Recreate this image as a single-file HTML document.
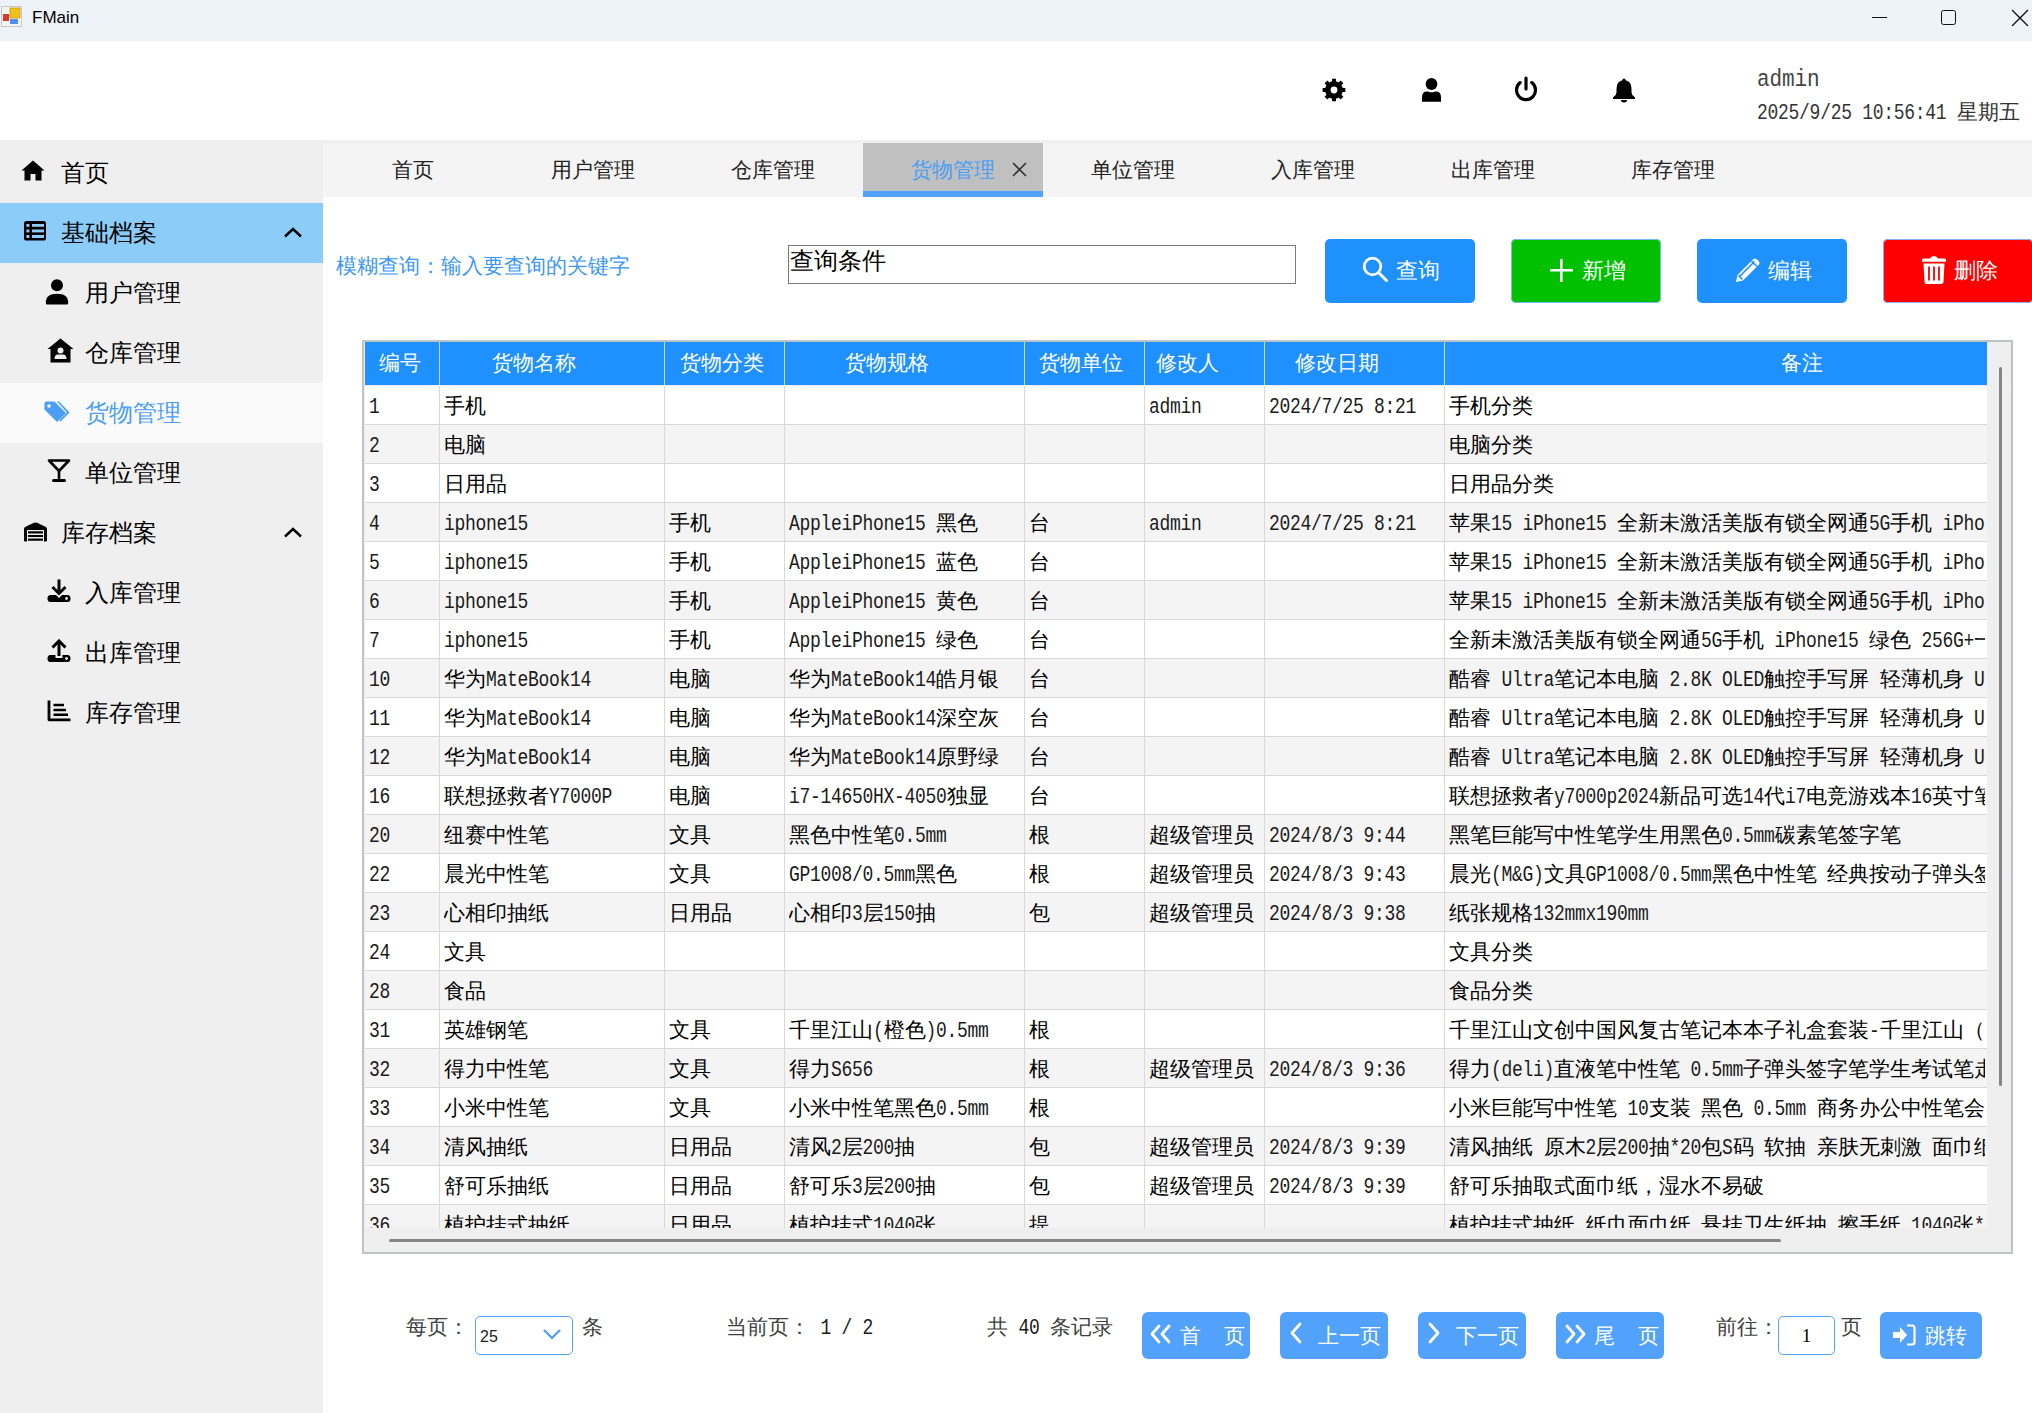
<!DOCTYPE html><html><head><meta charset="utf-8"><style>
html,body{margin:0;padding:0;}
body{width:2032px;height:1413px;overflow:hidden;position:relative;background:#fff;font-weight:300;font-family:'Liberation Sans',sans-serif;}
.t{position:absolute;white-space:nowrap;}
.m{font-family:'Liberation Mono',monospace;}
b.a{font-weight:normal;color:#1a1a1a;font-family:'Liberation Mono',monospace;font-size:18px;letter-spacing:-0.3px;display:inline-block;transform:scaleY(1.18);transform-origin:50% 62%;}
svg{display:block}
</style></head><body>
<div style="position:absolute;left:0px;top:0px;width:2032px;height:41px;background:#eef2f9"></div>
<svg style="position:absolute;left:1px;top:6px" width="21" height="21" viewBox="0 0 21 21"><rect x="0.5" y="0.5" width="20" height="20" fill="#f4f4f4" stroke="#c8c8c8"/>
<rect x="9" y="2" width="10" height="10" fill="#f2c21a" stroke="#c99a10" stroke-width="0.8"/>
<rect x="2" y="8" width="6" height="7" fill="#d83a2a"/>
<rect x="9" y="13" width="8" height="5" fill="#4d8ef0"/></svg>
<div class="t " style="left:32px;top:5px;font-size:17px;line-height:26px;height:26px;color:#000;">FMain</div>
<div style="position:absolute;left:1872px;top:17px;width:15px;height:1.2px;background:#111"></div>
<div style="position:absolute;left:1941px;top:10px;width:15px;height:15px;border:1.6px solid #111;border-radius:2.5px;box-sizing:border-box"></div>
<svg style="position:absolute;left:2011px;top:9px" width="18" height="18" viewBox="0 0 18 18"><path d="M1.5,1.5 L16.5,16.5 M16.5,1.5 L1.5,16.5" stroke="#111" stroke-width="1.4" stroke-linecap="round"/></svg>
<svg style="position:absolute;left:1322px;top:78px" width="24" height="24" viewBox="0 0 24 24"><path fill="#000" fill-rule="evenodd" d="M20.58,10.04 L23.34,10.07 L23.34,13.93 L20.58,13.96 L20.13,15.37 L19.45,16.68 L21.38,18.65 L18.65,21.38 L16.68,19.45 L15.37,20.13 L13.96,20.58 L13.93,23.34 L10.07,23.34 L10.04,20.58 L8.63,20.13 L7.32,19.45 L5.35,21.38 L2.62,18.65 L4.55,16.68 L3.87,15.37 L3.42,13.96 L0.66,13.93 L0.66,10.07 L3.42,10.04 L3.87,8.63 L4.55,7.32 L2.62,5.35 L5.35,2.62 L7.32,4.55 L8.63,3.87 L10.04,3.42 L10.07,0.66 L13.93,0.66 L13.96,3.42 L15.37,3.87 L16.68,4.55 L18.65,2.62 L21.38,5.35 L19.45,7.32 L20.13,8.63Z M15.4,12 A3.4,3.4 0 1,0 8.6,12 A3.4,3.4 0 1,0 15.4,12Z"/><circle cx="12" cy="12" r="8.6" fill="#000"/><circle cx="12" cy="12" r="3.4" fill="#fff"/></svg>
<svg style="position:absolute;left:1421px;top:78px" width="21" height="24" viewBox="0 0 21 24"><circle cx="10.5" cy="6" r="5.9" fill="#000"/><path d="M1,23.8 L1,19 Q1,13.4 6,13.4 L7.2,13.4 Q10.5,15.2 13.8,13.4 L15,13.4 Q20,13.4 20,19 L20,23.8 Z" fill="#000"/></svg>
<svg style="position:absolute;left:1513px;top:76px" width="26" height="26" viewBox="0 0 26 26"><path d="M7.2,6.6 A9.5,9.5 0 1,0 18.8,6.6" fill="none" stroke="#000" stroke-width="3.2" stroke-linecap="round"/><path d="M13,2 L13,13" stroke="#000" stroke-width="3.2" stroke-linecap="round"/></svg>
<svg style="position:absolute;left:1612px;top:78px" width="24" height="25" viewBox="0 0 24 25"><path d="M12,0.5 Q13.6,0.5 13.6,2.2 Q19.5,3.5 19.5,10.5 L19.5,14.5 Q19.5,17 23,19.5 L23,21 L1,21 L1,19.5 Q4.5,17 4.5,14.5 L4.5,10.5 Q4.5,3.5 10.4,2.2 Q10.4,0.5 12,0.5 Z M9,22 L15,22 Q15,24.5 12,24.5 Q9,24.5 9,22 Z" fill="#000"/></svg>
<div class="t m" style="left:1757px;top:66px;font-size:21px;line-height:30px;height:30px;color:#444;letter-spacing:-0.1px"><span style="display:inline-block;transform:scaleY(1.12);transform-origin:50% 70%">admin</span></div>
<div class="t m" style="left:1757px;top:97px;font-size:18px;line-height:30px;height:30px;color:#333;letter-spacing:-0.28px"><span style="display:inline-block;transform:scaleY(1.18);transform-origin:50% 65%">2025/9/25&nbsp;10:56:41&nbsp;</span><span style="font-family:'Liberation Sans',sans-serif;font-size:21px;letter-spacing:0">星期五</span></div>
<div style="position:absolute;left:0px;top:140px;width:2032px;height:3px;background:#efefef"></div>
<div style="position:absolute;left:0px;top:140px;width:323px;height:1273px;background:#efefef"></div>
<div style="position:absolute;left:0px;top:203px;width:323px;height:60px;background:#8bcdf8"></div>
<div style="position:absolute;left:0px;top:383px;width:323px;height:60px;background:#fafafa"></div>
<div class="t " style="left:61px;top:153px;font-size:24px;line-height:40px;height:40px;color:#000;">首页</div>
<div class="t " style="left:61px;top:213px;font-size:24px;line-height:40px;height:40px;color:#000;">基础档案</div>
<div class="t " style="left:85px;top:273px;font-size:24px;line-height:40px;height:40px;color:#000;">用户管理</div>
<div class="t " style="left:85px;top:333px;font-size:24px;line-height:40px;height:40px;color:#000;">仓库管理</div>
<div class="t " style="left:85px;top:393px;font-size:24px;line-height:40px;height:40px;color:#4a9ff5;">货物管理</div>
<div class="t " style="left:85px;top:453px;font-size:24px;line-height:40px;height:40px;color:#000;">单位管理</div>
<div class="t " style="left:61px;top:513px;font-size:24px;line-height:40px;height:40px;color:#000;">库存档案</div>
<div class="t " style="left:85px;top:573px;font-size:24px;line-height:40px;height:40px;color:#000;">入库管理</div>
<div class="t " style="left:85px;top:633px;font-size:24px;line-height:40px;height:40px;color:#000;">出库管理</div>
<div class="t " style="left:85px;top:693px;font-size:24px;line-height:40px;height:40px;color:#000;">库存管理</div>
<svg style="position:absolute;left:21px;top:160px" width="24" height="21" viewBox="0 0 24 21"><path d="M12,0.5 L23.5,10.5 L20.5,10.5 L20.5,20.5 L14.5,20.5 L14.5,14 L9.5,14 L9.5,20.5 L3.5,20.5 L3.5,10.5 L0.5,10.5 Z" fill="#000"/></svg>
<svg style="position:absolute;left:23px;top:220px" width="24" height="22" viewBox="0 0 24 22"><rect x="1" y="1" width="22" height="19.6" rx="2.6" fill="#000"/><g fill="#8bcdf8"><rect x="3.4" y="4" width="3" height="2.8"/><rect x="9" y="4" width="12" height="2.8"/><rect x="3.4" y="9.5" width="3" height="2.9"/><rect x="9" y="9.5" width="12" height="2.9"/><rect x="3.4" y="15" width="3" height="3"/><rect x="9" y="15" width="12" height="3"/></g></svg>
<svg style="position:absolute;left:45px;top:279px" width="24" height="26" viewBox="0 0 24 26"><circle cx="12" cy="6.3" r="6" fill="#000"/><path d="M0.8,24 Q0.8,14.8 12,14.8 Q23.2,14.8 23.2,24 Q23.2,25.5 21.7,25.5 L2.3,25.5 Q0.8,25.5 0.8,24 Z" fill="#000"/></svg>
<svg style="position:absolute;left:47px;top:338px" width="27" height="25" viewBox="0 0 27 25"><path d="M13.5,0.5 L26.5,11 L23.5,11 L23.5,24.5 L3.5,24.5 L3.5,11 L0.5,11 Z" fill="#000"/><circle cx="13.5" cy="12.5" r="3" fill="#efefef"/><path d="M7.5,21 Q7.5,16.5 11,16.5 L16,16.5 Q19.5,16.5 19.5,21 Z" fill="#efefef"/></svg>
<svg style="position:absolute;left:44px;top:401px" width="26" height="21" viewBox="0 0 26 21"><path d="M0.5,2.5 Q0.5,0.5 2.5,0.5 L10.5,0.5 L22,12 L13,21 L0.5,8.5 Z" fill="#4a9ff5"/><circle cx="5" cy="5" r="1.8" fill="#fafafa"/><path d="M13,0.5 L15,0.5 L25.5,11.5 L16.5,20.5 L15.2,19.2 L23,11.5 Z" fill="#4a9ff5"/></svg>
<svg style="position:absolute;left:47px;top:458px" width="24" height="25" viewBox="0 0 24 25"><path d="M2,2.5 L22,2.5 L12,13 Z" fill="none" stroke="#000" stroke-width="2.6" stroke-linejoin="round"/><path d="M12,12 L12,22" stroke="#000" stroke-width="2.6"/><path d="M6.5,22.5 L17.5,22.5" stroke="#000" stroke-width="3" stroke-linecap="round"/></svg>
<svg style="position:absolute;left:23px;top:522px" width="25" height="20" viewBox="0 0 25 20"><path d="M1,18.5 L1,7 Q1,5.5 2.5,4.8 L11,0.8 Q12.5,0.2 14,0.8 L22.5,4.8 Q24,5.5 24,7 L24,18.5 Q24,19.5 23,19.5 L21,19.5 L21,8 L4,8 L4,19.5 L2,19.5 Q1,19.5 1,18.5 Z" fill="#000"/><path d="M5,10.3 H20 M5,14 H20 M5,17.7 H20" stroke="#000" stroke-width="2.2"/></svg>
<svg style="position:absolute;left:47px;top:579px" width="24" height="24" viewBox="0 0 24 24"><path d="M12,0.5 L12,13" stroke="#000" stroke-width="3"/><path d="M5.5,8 L12,14.5 L18.5,8" fill="none" stroke="#000" stroke-width="3"/><path d="M3.5,16 L9,16 L12,19 L15,16 L20.5,16 Q23.5,16 23.5,19.5 Q23.5,23 20.5,23 L3.5,23 Q0.5,23 0.5,19.5 Q0.5,16 3.5,16 Z" fill="#000"/><circle cx="19.5" cy="19.5" r="1.4" fill="#efefef"/></svg>
<svg style="position:absolute;left:47px;top:639px" width="24" height="24" viewBox="0 0 24 24"><path d="M12,17 L12,3" stroke="#000" stroke-width="3"/><path d="M5.5,8.5 L12,2 L18.5,8.5" fill="none" stroke="#000" stroke-width="3"/><path d="M3.5,16 L8.5,16 L8.5,19 L15.5,19 L15.5,16 L20.5,16 Q23.5,16 23.5,19.5 Q23.5,23 20.5,23 L3.5,23 Q0.5,23 0.5,19.5 Q0.5,16 3.5,16 Z" fill="#000"/><circle cx="19.5" cy="19.5" r="1.4" fill="#efefef"/></svg>
<svg style="position:absolute;left:47px;top:700px" width="24" height="22" viewBox="0 0 24 22"><path d="M2,0.5 L2,19.8 L23.5,19.8" fill="none" stroke="#000" stroke-width="2.8" stroke-linejoin="round"/><path d="M6.5,5 H17 M6.5,10 H19 M6.5,14.8 H21" stroke="#000" stroke-width="2.4"/></svg>
<svg style="position:absolute;left:283px;top:227px" width="20" height="11" viewBox="0 0 20 11"><path d="M2,9.5 L10,2 L18,9.5" fill="none" stroke="#000" stroke-width="2.4"/></svg>
<svg style="position:absolute;left:283px;top:527px" width="20" height="11" viewBox="0 0 20 11"><path d="M2,9.5 L10,2 L18,9.5" fill="none" stroke="#000" stroke-width="2.4"/></svg>
<div style="position:absolute;left:323px;top:143px;width:1709px;height:54px;background:#f4f4f4"></div>
<div style="position:absolute;left:863px;top:143px;width:180px;height:48px;background:#c0c0c0"></div>
<div style="position:absolute;left:863px;top:191px;width:180px;height:6px;background:#50a2fa"></div>
<div class="t" style="left:323px;top:150px;width:180px;text-align:center;font-size:21px;line-height:40px;height:40px;color:#222">首页</div>
<div class="t" style="left:503px;top:150px;width:180px;text-align:center;font-size:21px;line-height:40px;height:40px;color:#222">用户管理</div>
<div class="t" style="left:683px;top:150px;width:180px;text-align:center;font-size:21px;line-height:40px;height:40px;color:#222">仓库管理</div>
<div class="t" style="left:863px;top:150px;width:180px;text-align:center;font-size:21px;line-height:40px;height:40px;color:#4a9ff5">货物管理</div>
<div class="t" style="left:1043px;top:150px;width:180px;text-align:center;font-size:21px;line-height:40px;height:40px;color:#222">单位管理</div>
<div class="t" style="left:1223px;top:150px;width:180px;text-align:center;font-size:21px;line-height:40px;height:40px;color:#222">入库管理</div>
<div class="t" style="left:1403px;top:150px;width:180px;text-align:center;font-size:21px;line-height:40px;height:40px;color:#222">出库管理</div>
<div class="t" style="left:1583px;top:150px;width:180px;text-align:center;font-size:21px;line-height:40px;height:40px;color:#222">库存管理</div>
<svg style="position:absolute;left:1012px;top:162px" width="15" height="15" viewBox="0 0 15 15"><path d="M1,1 L14,14 M14,1 L1,14" stroke="#333" stroke-width="1.6"/></svg>
<div class="t " style="left:336px;top:246px;font-size:21px;line-height:40px;height:40px;color:#3a97f5;">模糊查询：输入要查询的关键字</div>
<div style="position:absolute;left:788px;top:245px;width:508px;height:39px;border:1px solid #7a7a7a;box-sizing:border-box;background:#fff"></div>
<div class="t " style="left:790px;top:241px;font-size:24px;line-height:40px;height:40px;color:#000;">查询条件</div>
<div style="position:absolute;left:1325px;top:239px;width:150px;height:64px;background:#1f91fd;border-radius:5px;"></div>
<svg style="position:absolute;left:1362px;top:256px" width="28" height="28" viewBox="0 0 28 28"><circle cx="10.5" cy="10.5" r="8.3" fill="none" stroke="#fff" stroke-width="2.8"/><path d="M16.5,16.5 L24.5,24.5" stroke="#fff" stroke-width="3" stroke-linecap="round"/></svg>
<div class="t " style="left:1396px;top:251px;font-size:22px;line-height:40px;height:40px;color:#fff;">查询</div>
<div style="position:absolute;left:1511px;top:239px;width:150px;height:64px;background:#00c000;border-radius:5px;box-shadow:0 0 0 1px #7ab8f5 inset"></div>
<svg style="position:absolute;left:1549px;top:258px" width="25" height="25" viewBox="0 0 25 25"><path d="M12.3,1 V24 M1,12.3 H24" stroke="#fff" stroke-width="2.6"/></svg>
<div class="t " style="left:1582px;top:251px;font-size:22px;line-height:40px;height:40px;color:#fff;">新增</div>
<div style="position:absolute;left:1697px;top:239px;width:150px;height:64px;background:#1f91fd;border-radius:5px;"></div>
<svg style="position:absolute;left:1734px;top:256px" width="28" height="28" viewBox="0 0 28 28"><path d="M2,26 L3.5,19 L19,3.5 Q21,1.5 23,3.5 L24.5,5 Q26.5,7 24.5,9 L9,24.5 Z" fill="#fff"/><path d="M6,20 L20.5,5.5 M4.5,19.5 L8.5,23.5 M17.5,5 L23,10.5" stroke="#1f91fd" stroke-width="1.6" fill="none"/></svg>
<div class="t " style="left:1768px;top:251px;font-size:22px;line-height:40px;height:40px;color:#fff;">编辑</div>
<div style="position:absolute;left:1883px;top:239px;width:150px;height:64px;background:#ff0000;border-radius:5px;box-shadow:0 0 0 1px #8ab0f0 inset"></div>
<svg style="position:absolute;left:1921px;top:255px" width="26" height="30" viewBox="0 0 26 30"><path d="M1,5 Q1,3.5 2.5,3.5 L9,3.5 Q10,1 13,1 Q16,1 17,3.5 L23.5,3.5 Q25,3.5 25,5 L25,6.8 L1,6.8 Z" fill="#fff"/><path d="M2.5,8.5 L23.5,8.5 L22.5,26.5 Q22.5,29 20,29 L6,29 Q3.5,29 3.5,26.5 Z" fill="#fff"/><path d="M8,11.5 V25.5 M13,11.5 V25.5 M18,11.5 V25.5" stroke="#ff0000" stroke-width="1.8"/></svg>
<div class="t " style="left:1954px;top:251px;font-size:22px;line-height:40px;height:40px;color:#fff;">删除</div>
<div style="position:absolute;left:362px;top:340px;width:1651px;height:914px;border:2px solid #bfc2c8;box-sizing:border-box;background:#efefef"></div>
<div style="position:absolute;left:365px;top:342px;width:1622px;height:43px;background:#1e90ff"></div>
<div style="position:absolute;left:439px;top:342px;width:1px;height:43px;background:#c6daf0"></div>
<div style="position:absolute;left:664px;top:342px;width:1px;height:43px;background:#c6daf0"></div>
<div style="position:absolute;left:784px;top:342px;width:1px;height:43px;background:#c6daf0"></div>
<div style="position:absolute;left:1024px;top:342px;width:1px;height:43px;background:#c6daf0"></div>
<div style="position:absolute;left:1144px;top:342px;width:1px;height:43px;background:#c6daf0"></div>
<div style="position:absolute;left:1264px;top:342px;width:1px;height:43px;background:#c6daf0"></div>
<div style="position:absolute;left:1444px;top:342px;width:1px;height:43px;background:#c6daf0"></div>
<div class="t " style="left:379px;top:343px;font-size:21px;line-height:40px;height:40px;color:#fff;">编号</div>
<div class="t " style="left:492px;top:343px;font-size:21px;line-height:40px;height:40px;color:#fff;">货物名称</div>
<div class="t " style="left:680px;top:343px;font-size:21px;line-height:40px;height:40px;color:#fff;">货物分类</div>
<div class="t " style="left:845px;top:343px;font-size:21px;line-height:40px;height:40px;color:#fff;">货物规格</div>
<div class="t " style="left:1039px;top:343px;font-size:21px;line-height:40px;height:40px;color:#fff;">货物单位</div>
<div class="t " style="left:1156px;top:343px;font-size:21px;line-height:40px;height:40px;color:#fff;">修改人</div>
<div class="t " style="left:1295px;top:343px;font-size:21px;line-height:40px;height:40px;color:#fff;">修改日期</div>
<div class="t " style="left:1781px;top:343px;font-size:21px;line-height:40px;height:40px;color:#fff;">备注</div>
<div style="position:absolute;left:365px;top:386px;width:1622px;height:842px;overflow:hidden">
<div style="position:absolute;left:0;top:0px;width:1622px;height:39px;background:#ffffff"></div>
<div style="position:absolute;left:0;top:38px;width:1622px;height:1px;background:#d9d9d9"></div>
<div class="t" style="left:4px;top:0px;width:69px;overflow:hidden;font-size:21px;line-height:39px;height:39px;color:#000"><b class="a">1</b></div>
<div class="t" style="left:79px;top:0px;width:219px;overflow:hidden;font-size:21px;line-height:39px;height:39px;color:#000">手机</div>
<div class="t" style="left:784px;top:0px;width:114px;overflow:hidden;font-size:21px;line-height:39px;height:39px;color:#000"><b class="a">admin</b></div>
<div class="t" style="left:904px;top:0px;width:174px;overflow:hidden;font-size:21px;line-height:39px;height:39px;color:#000"><b class="a">2024/7/25&nbsp;8:21</b></div>
<div class="t" style="left:1084px;top:0px;width:536px;overflow:hidden;font-size:21px;line-height:39px;height:39px;color:#000">手机分类</div>
<div style="position:absolute;left:0;top:39px;width:1622px;height:39px;background:#f4f4f4"></div>
<div style="position:absolute;left:0;top:77px;width:1622px;height:1px;background:#d9d9d9"></div>
<div class="t" style="left:4px;top:39px;width:69px;overflow:hidden;font-size:21px;line-height:39px;height:39px;color:#000"><b class="a">2</b></div>
<div class="t" style="left:79px;top:39px;width:219px;overflow:hidden;font-size:21px;line-height:39px;height:39px;color:#000">电脑</div>
<div class="t" style="left:1084px;top:39px;width:536px;overflow:hidden;font-size:21px;line-height:39px;height:39px;color:#000">电脑分类</div>
<div style="position:absolute;left:0;top:78px;width:1622px;height:39px;background:#ffffff"></div>
<div style="position:absolute;left:0;top:116px;width:1622px;height:1px;background:#d9d9d9"></div>
<div class="t" style="left:4px;top:78px;width:69px;overflow:hidden;font-size:21px;line-height:39px;height:39px;color:#000"><b class="a">3</b></div>
<div class="t" style="left:79px;top:78px;width:219px;overflow:hidden;font-size:21px;line-height:39px;height:39px;color:#000">日用品</div>
<div class="t" style="left:1084px;top:78px;width:536px;overflow:hidden;font-size:21px;line-height:39px;height:39px;color:#000">日用品分类</div>
<div style="position:absolute;left:0;top:117px;width:1622px;height:39px;background:#f4f4f4"></div>
<div style="position:absolute;left:0;top:155px;width:1622px;height:1px;background:#d9d9d9"></div>
<div class="t" style="left:4px;top:117px;width:69px;overflow:hidden;font-size:21px;line-height:39px;height:39px;color:#000"><b class="a">4</b></div>
<div class="t" style="left:79px;top:117px;width:219px;overflow:hidden;font-size:21px;line-height:39px;height:39px;color:#000"><b class="a">iphone15</b></div>
<div class="t" style="left:304px;top:117px;width:114px;overflow:hidden;font-size:21px;line-height:39px;height:39px;color:#000">手机</div>
<div class="t" style="left:424px;top:117px;width:234px;overflow:hidden;font-size:21px;line-height:39px;height:39px;color:#000"><b class="a">AppleiPhone15&nbsp;</b>黑色</div>
<div class="t" style="left:664px;top:117px;width:114px;overflow:hidden;font-size:21px;line-height:39px;height:39px;color:#000">台</div>
<div class="t" style="left:784px;top:117px;width:114px;overflow:hidden;font-size:21px;line-height:39px;height:39px;color:#000"><b class="a">admin</b></div>
<div class="t" style="left:904px;top:117px;width:174px;overflow:hidden;font-size:21px;line-height:39px;height:39px;color:#000"><b class="a">2024/7/25&nbsp;8:21</b></div>
<div class="t" style="left:1084px;top:117px;width:536px;overflow:hidden;font-size:21px;line-height:39px;height:39px;color:#000">苹果<b class="a">15&nbsp;iPhone15&nbsp;</b>全新未激活美版有锁全网通<b class="a">5G</b>手机<b class="a">&nbsp;iPhone15&nbsp;</b>黑色</div>
<div style="position:absolute;left:0;top:156px;width:1622px;height:39px;background:#ffffff"></div>
<div style="position:absolute;left:0;top:194px;width:1622px;height:1px;background:#d9d9d9"></div>
<div class="t" style="left:4px;top:156px;width:69px;overflow:hidden;font-size:21px;line-height:39px;height:39px;color:#000"><b class="a">5</b></div>
<div class="t" style="left:79px;top:156px;width:219px;overflow:hidden;font-size:21px;line-height:39px;height:39px;color:#000"><b class="a">iphone15</b></div>
<div class="t" style="left:304px;top:156px;width:114px;overflow:hidden;font-size:21px;line-height:39px;height:39px;color:#000">手机</div>
<div class="t" style="left:424px;top:156px;width:234px;overflow:hidden;font-size:21px;line-height:39px;height:39px;color:#000"><b class="a">AppleiPhone15&nbsp;</b>蓝色</div>
<div class="t" style="left:664px;top:156px;width:114px;overflow:hidden;font-size:21px;line-height:39px;height:39px;color:#000">台</div>
<div class="t" style="left:1084px;top:156px;width:536px;overflow:hidden;font-size:21px;line-height:39px;height:39px;color:#000">苹果<b class="a">15&nbsp;iPhone15&nbsp;</b>全新未激活美版有锁全网通<b class="a">5G</b>手机<b class="a">&nbsp;iPhone15&nbsp;</b>蓝色</div>
<div style="position:absolute;left:0;top:195px;width:1622px;height:39px;background:#f4f4f4"></div>
<div style="position:absolute;left:0;top:233px;width:1622px;height:1px;background:#d9d9d9"></div>
<div class="t" style="left:4px;top:195px;width:69px;overflow:hidden;font-size:21px;line-height:39px;height:39px;color:#000"><b class="a">6</b></div>
<div class="t" style="left:79px;top:195px;width:219px;overflow:hidden;font-size:21px;line-height:39px;height:39px;color:#000"><b class="a">iphone15</b></div>
<div class="t" style="left:304px;top:195px;width:114px;overflow:hidden;font-size:21px;line-height:39px;height:39px;color:#000">手机</div>
<div class="t" style="left:424px;top:195px;width:234px;overflow:hidden;font-size:21px;line-height:39px;height:39px;color:#000"><b class="a">AppleiPhone15&nbsp;</b>黄色</div>
<div class="t" style="left:664px;top:195px;width:114px;overflow:hidden;font-size:21px;line-height:39px;height:39px;color:#000">台</div>
<div class="t" style="left:1084px;top:195px;width:536px;overflow:hidden;font-size:21px;line-height:39px;height:39px;color:#000">苹果<b class="a">15&nbsp;iPhone15&nbsp;</b>全新未激活美版有锁全网通<b class="a">5G</b>手机<b class="a">&nbsp;iPhone15&nbsp;</b>黄色</div>
<div style="position:absolute;left:0;top:234px;width:1622px;height:39px;background:#ffffff"></div>
<div style="position:absolute;left:0;top:272px;width:1622px;height:1px;background:#d9d9d9"></div>
<div class="t" style="left:4px;top:234px;width:69px;overflow:hidden;font-size:21px;line-height:39px;height:39px;color:#000"><b class="a">7</b></div>
<div class="t" style="left:79px;top:234px;width:219px;overflow:hidden;font-size:21px;line-height:39px;height:39px;color:#000"><b class="a">iphone15</b></div>
<div class="t" style="left:304px;top:234px;width:114px;overflow:hidden;font-size:21px;line-height:39px;height:39px;color:#000">手机</div>
<div class="t" style="left:424px;top:234px;width:234px;overflow:hidden;font-size:21px;line-height:39px;height:39px;color:#000"><b class="a">AppleiPhone15&nbsp;</b>绿色</div>
<div class="t" style="left:664px;top:234px;width:114px;overflow:hidden;font-size:21px;line-height:39px;height:39px;color:#000">台</div>
<div class="t" style="left:1084px;top:234px;width:536px;overflow:hidden;font-size:21px;line-height:39px;height:39px;color:#000">全新未激活美版有锁全网通<b class="a">5G</b>手机<b class="a">&nbsp;iPhone15&nbsp;</b>绿色<b class="a">&nbsp;256G+</b>一年</div>
<div style="position:absolute;left:0;top:273px;width:1622px;height:39px;background:#f4f4f4"></div>
<div style="position:absolute;left:0;top:311px;width:1622px;height:1px;background:#d9d9d9"></div>
<div class="t" style="left:4px;top:273px;width:69px;overflow:hidden;font-size:21px;line-height:39px;height:39px;color:#000"><b class="a">10</b></div>
<div class="t" style="left:79px;top:273px;width:219px;overflow:hidden;font-size:21px;line-height:39px;height:39px;color:#000">华为<b class="a">MateBook14</b></div>
<div class="t" style="left:304px;top:273px;width:114px;overflow:hidden;font-size:21px;line-height:39px;height:39px;color:#000">电脑</div>
<div class="t" style="left:424px;top:273px;width:234px;overflow:hidden;font-size:21px;line-height:39px;height:39px;color:#000">华为<b class="a">MateBook14</b>皓月银</div>
<div class="t" style="left:664px;top:273px;width:114px;overflow:hidden;font-size:21px;line-height:39px;height:39px;color:#000">台</div>
<div class="t" style="left:1084px;top:273px;width:536px;overflow:hidden;font-size:21px;line-height:39px;height:39px;color:#000">酷睿<b class="a">&nbsp;Ultra</b>笔记本电脑<b class="a">&nbsp;2.8K&nbsp;OLED</b>触控手写屏<b class="a">&nbsp;</b>轻薄机身<b class="a">&nbsp;Ultra</b></div>
<div style="position:absolute;left:0;top:312px;width:1622px;height:39px;background:#ffffff"></div>
<div style="position:absolute;left:0;top:350px;width:1622px;height:1px;background:#d9d9d9"></div>
<div class="t" style="left:4px;top:312px;width:69px;overflow:hidden;font-size:21px;line-height:39px;height:39px;color:#000"><b class="a">11</b></div>
<div class="t" style="left:79px;top:312px;width:219px;overflow:hidden;font-size:21px;line-height:39px;height:39px;color:#000">华为<b class="a">MateBook14</b></div>
<div class="t" style="left:304px;top:312px;width:114px;overflow:hidden;font-size:21px;line-height:39px;height:39px;color:#000">电脑</div>
<div class="t" style="left:424px;top:312px;width:234px;overflow:hidden;font-size:21px;line-height:39px;height:39px;color:#000">华为<b class="a">MateBook14</b>深空灰</div>
<div class="t" style="left:664px;top:312px;width:114px;overflow:hidden;font-size:21px;line-height:39px;height:39px;color:#000">台</div>
<div class="t" style="left:1084px;top:312px;width:536px;overflow:hidden;font-size:21px;line-height:39px;height:39px;color:#000">酷睿<b class="a">&nbsp;Ultra</b>笔记本电脑<b class="a">&nbsp;2.8K&nbsp;OLED</b>触控手写屏<b class="a">&nbsp;</b>轻薄机身<b class="a">&nbsp;Ultra</b></div>
<div style="position:absolute;left:0;top:351px;width:1622px;height:39px;background:#f4f4f4"></div>
<div style="position:absolute;left:0;top:389px;width:1622px;height:1px;background:#d9d9d9"></div>
<div class="t" style="left:4px;top:351px;width:69px;overflow:hidden;font-size:21px;line-height:39px;height:39px;color:#000"><b class="a">12</b></div>
<div class="t" style="left:79px;top:351px;width:219px;overflow:hidden;font-size:21px;line-height:39px;height:39px;color:#000">华为<b class="a">MateBook14</b></div>
<div class="t" style="left:304px;top:351px;width:114px;overflow:hidden;font-size:21px;line-height:39px;height:39px;color:#000">电脑</div>
<div class="t" style="left:424px;top:351px;width:234px;overflow:hidden;font-size:21px;line-height:39px;height:39px;color:#000">华为<b class="a">MateBook14</b>原野绿</div>
<div class="t" style="left:664px;top:351px;width:114px;overflow:hidden;font-size:21px;line-height:39px;height:39px;color:#000">台</div>
<div class="t" style="left:1084px;top:351px;width:536px;overflow:hidden;font-size:21px;line-height:39px;height:39px;color:#000">酷睿<b class="a">&nbsp;Ultra</b>笔记本电脑<b class="a">&nbsp;2.8K&nbsp;OLED</b>触控手写屏<b class="a">&nbsp;</b>轻薄机身<b class="a">&nbsp;Ultra</b></div>
<div style="position:absolute;left:0;top:390px;width:1622px;height:39px;background:#ffffff"></div>
<div style="position:absolute;left:0;top:428px;width:1622px;height:1px;background:#d9d9d9"></div>
<div class="t" style="left:4px;top:390px;width:69px;overflow:hidden;font-size:21px;line-height:39px;height:39px;color:#000"><b class="a">16</b></div>
<div class="t" style="left:79px;top:390px;width:219px;overflow:hidden;font-size:21px;line-height:39px;height:39px;color:#000">联想拯救者<b class="a">Y7000P</b></div>
<div class="t" style="left:304px;top:390px;width:114px;overflow:hidden;font-size:21px;line-height:39px;height:39px;color:#000">电脑</div>
<div class="t" style="left:424px;top:390px;width:234px;overflow:hidden;font-size:21px;line-height:39px;height:39px;color:#000"><b class="a">i7-14650HX-4050</b>独显</div>
<div class="t" style="left:664px;top:390px;width:114px;overflow:hidden;font-size:21px;line-height:39px;height:39px;color:#000">台</div>
<div class="t" style="left:1084px;top:390px;width:536px;overflow:hidden;font-size:21px;line-height:39px;height:39px;color:#000">联想拯救者<b class="a">y7000p2024</b>新品可选<b class="a">14</b>代<b class="a">i7</b>电竞游戏本<b class="a">16</b>英寸笔记本</div>
<div style="position:absolute;left:0;top:429px;width:1622px;height:39px;background:#f4f4f4"></div>
<div style="position:absolute;left:0;top:467px;width:1622px;height:1px;background:#d9d9d9"></div>
<div class="t" style="left:4px;top:429px;width:69px;overflow:hidden;font-size:21px;line-height:39px;height:39px;color:#000"><b class="a">20</b></div>
<div class="t" style="left:79px;top:429px;width:219px;overflow:hidden;font-size:21px;line-height:39px;height:39px;color:#000">纽赛中性笔</div>
<div class="t" style="left:304px;top:429px;width:114px;overflow:hidden;font-size:21px;line-height:39px;height:39px;color:#000">文具</div>
<div class="t" style="left:424px;top:429px;width:234px;overflow:hidden;font-size:21px;line-height:39px;height:39px;color:#000">黑色中性笔<b class="a">0.5mm</b></div>
<div class="t" style="left:664px;top:429px;width:114px;overflow:hidden;font-size:21px;line-height:39px;height:39px;color:#000">根</div>
<div class="t" style="left:784px;top:429px;width:114px;overflow:hidden;font-size:21px;line-height:39px;height:39px;color:#000">超级管理员</div>
<div class="t" style="left:904px;top:429px;width:174px;overflow:hidden;font-size:21px;line-height:39px;height:39px;color:#000"><b class="a">2024/8/3&nbsp;9:44</b></div>
<div class="t" style="left:1084px;top:429px;width:536px;overflow:hidden;font-size:21px;line-height:39px;height:39px;color:#000">黑笔巨能写中性笔学生用黑色<b class="a">0.5mm</b>碳素笔签字笔</div>
<div style="position:absolute;left:0;top:468px;width:1622px;height:39px;background:#ffffff"></div>
<div style="position:absolute;left:0;top:506px;width:1622px;height:1px;background:#d9d9d9"></div>
<div class="t" style="left:4px;top:468px;width:69px;overflow:hidden;font-size:21px;line-height:39px;height:39px;color:#000"><b class="a">22</b></div>
<div class="t" style="left:79px;top:468px;width:219px;overflow:hidden;font-size:21px;line-height:39px;height:39px;color:#000">晨光中性笔</div>
<div class="t" style="left:304px;top:468px;width:114px;overflow:hidden;font-size:21px;line-height:39px;height:39px;color:#000">文具</div>
<div class="t" style="left:424px;top:468px;width:234px;overflow:hidden;font-size:21px;line-height:39px;height:39px;color:#000"><b class="a">GP1008/0.5mm</b>黑色</div>
<div class="t" style="left:664px;top:468px;width:114px;overflow:hidden;font-size:21px;line-height:39px;height:39px;color:#000">根</div>
<div class="t" style="left:784px;top:468px;width:114px;overflow:hidden;font-size:21px;line-height:39px;height:39px;color:#000">超级管理员</div>
<div class="t" style="left:904px;top:468px;width:174px;overflow:hidden;font-size:21px;line-height:39px;height:39px;color:#000"><b class="a">2024/8/3&nbsp;9:43</b></div>
<div class="t" style="left:1084px;top:468px;width:536px;overflow:hidden;font-size:21px;line-height:39px;height:39px;color:#000">晨光<b class="a">(M&amp;G)</b>文具<b class="a">GP1008/0.5mm</b>黑色中性笔<b class="a">&nbsp;</b>经典按动子弹头签字笔</div>
<div style="position:absolute;left:0;top:507px;width:1622px;height:39px;background:#f4f4f4"></div>
<div style="position:absolute;left:0;top:545px;width:1622px;height:1px;background:#d9d9d9"></div>
<div class="t" style="left:4px;top:507px;width:69px;overflow:hidden;font-size:21px;line-height:39px;height:39px;color:#000"><b class="a">23</b></div>
<div class="t" style="left:79px;top:507px;width:219px;overflow:hidden;font-size:21px;line-height:39px;height:39px;color:#000">心相印抽纸</div>
<div class="t" style="left:304px;top:507px;width:114px;overflow:hidden;font-size:21px;line-height:39px;height:39px;color:#000">日用品</div>
<div class="t" style="left:424px;top:507px;width:234px;overflow:hidden;font-size:21px;line-height:39px;height:39px;color:#000">心相印<b class="a">3</b>层<b class="a">150</b>抽</div>
<div class="t" style="left:664px;top:507px;width:114px;overflow:hidden;font-size:21px;line-height:39px;height:39px;color:#000">包</div>
<div class="t" style="left:784px;top:507px;width:114px;overflow:hidden;font-size:21px;line-height:39px;height:39px;color:#000">超级管理员</div>
<div class="t" style="left:904px;top:507px;width:174px;overflow:hidden;font-size:21px;line-height:39px;height:39px;color:#000"><b class="a">2024/8/3&nbsp;9:38</b></div>
<div class="t" style="left:1084px;top:507px;width:536px;overflow:hidden;font-size:21px;line-height:39px;height:39px;color:#000">纸张规格<b class="a">132mmx190mm</b></div>
<div style="position:absolute;left:0;top:546px;width:1622px;height:39px;background:#ffffff"></div>
<div style="position:absolute;left:0;top:584px;width:1622px;height:1px;background:#d9d9d9"></div>
<div class="t" style="left:4px;top:546px;width:69px;overflow:hidden;font-size:21px;line-height:39px;height:39px;color:#000"><b class="a">24</b></div>
<div class="t" style="left:79px;top:546px;width:219px;overflow:hidden;font-size:21px;line-height:39px;height:39px;color:#000">文具</div>
<div class="t" style="left:1084px;top:546px;width:536px;overflow:hidden;font-size:21px;line-height:39px;height:39px;color:#000">文具分类</div>
<div style="position:absolute;left:0;top:585px;width:1622px;height:39px;background:#f4f4f4"></div>
<div style="position:absolute;left:0;top:623px;width:1622px;height:1px;background:#d9d9d9"></div>
<div class="t" style="left:4px;top:585px;width:69px;overflow:hidden;font-size:21px;line-height:39px;height:39px;color:#000"><b class="a">28</b></div>
<div class="t" style="left:79px;top:585px;width:219px;overflow:hidden;font-size:21px;line-height:39px;height:39px;color:#000">食品</div>
<div class="t" style="left:1084px;top:585px;width:536px;overflow:hidden;font-size:21px;line-height:39px;height:39px;color:#000">食品分类</div>
<div style="position:absolute;left:0;top:624px;width:1622px;height:39px;background:#ffffff"></div>
<div style="position:absolute;left:0;top:662px;width:1622px;height:1px;background:#d9d9d9"></div>
<div class="t" style="left:4px;top:624px;width:69px;overflow:hidden;font-size:21px;line-height:39px;height:39px;color:#000"><b class="a">31</b></div>
<div class="t" style="left:79px;top:624px;width:219px;overflow:hidden;font-size:21px;line-height:39px;height:39px;color:#000">英雄钢笔</div>
<div class="t" style="left:304px;top:624px;width:114px;overflow:hidden;font-size:21px;line-height:39px;height:39px;color:#000">文具</div>
<div class="t" style="left:424px;top:624px;width:234px;overflow:hidden;font-size:21px;line-height:39px;height:39px;color:#000">千里江山<b class="a">(</b>橙色<b class="a">)0.5mm</b></div>
<div class="t" style="left:664px;top:624px;width:114px;overflow:hidden;font-size:21px;line-height:39px;height:39px;color:#000">根</div>
<div class="t" style="left:1084px;top:624px;width:536px;overflow:hidden;font-size:21px;line-height:39px;height:39px;color:#000">千里江山文创中国风复古笔记本本子礼盒套装<b class="a">-</b>千里江山（升级</div>
<div style="position:absolute;left:0;top:663px;width:1622px;height:39px;background:#f4f4f4"></div>
<div style="position:absolute;left:0;top:701px;width:1622px;height:1px;background:#d9d9d9"></div>
<div class="t" style="left:4px;top:663px;width:69px;overflow:hidden;font-size:21px;line-height:39px;height:39px;color:#000"><b class="a">32</b></div>
<div class="t" style="left:79px;top:663px;width:219px;overflow:hidden;font-size:21px;line-height:39px;height:39px;color:#000">得力中性笔</div>
<div class="t" style="left:304px;top:663px;width:114px;overflow:hidden;font-size:21px;line-height:39px;height:39px;color:#000">文具</div>
<div class="t" style="left:424px;top:663px;width:234px;overflow:hidden;font-size:21px;line-height:39px;height:39px;color:#000">得力<b class="a">S656</b></div>
<div class="t" style="left:664px;top:663px;width:114px;overflow:hidden;font-size:21px;line-height:39px;height:39px;color:#000">根</div>
<div class="t" style="left:784px;top:663px;width:114px;overflow:hidden;font-size:21px;line-height:39px;height:39px;color:#000">超级管理员</div>
<div class="t" style="left:904px;top:663px;width:174px;overflow:hidden;font-size:21px;line-height:39px;height:39px;color:#000"><b class="a">2024/8/3&nbsp;9:36</b></div>
<div class="t" style="left:1084px;top:663px;width:536px;overflow:hidden;font-size:21px;line-height:39px;height:39px;color:#000">得力<b class="a">(deli)</b>直液笔中性笔<b class="a">&nbsp;0.5mm</b>子弹头签字笔学生考试笔走珠</div>
<div style="position:absolute;left:0;top:702px;width:1622px;height:39px;background:#ffffff"></div>
<div style="position:absolute;left:0;top:740px;width:1622px;height:1px;background:#d9d9d9"></div>
<div class="t" style="left:4px;top:702px;width:69px;overflow:hidden;font-size:21px;line-height:39px;height:39px;color:#000"><b class="a">33</b></div>
<div class="t" style="left:79px;top:702px;width:219px;overflow:hidden;font-size:21px;line-height:39px;height:39px;color:#000">小米中性笔</div>
<div class="t" style="left:304px;top:702px;width:114px;overflow:hidden;font-size:21px;line-height:39px;height:39px;color:#000">文具</div>
<div class="t" style="left:424px;top:702px;width:234px;overflow:hidden;font-size:21px;line-height:39px;height:39px;color:#000">小米中性笔黑色<b class="a">0.5mm</b></div>
<div class="t" style="left:664px;top:702px;width:114px;overflow:hidden;font-size:21px;line-height:39px;height:39px;color:#000">根</div>
<div class="t" style="left:1084px;top:702px;width:536px;overflow:hidden;font-size:21px;line-height:39px;height:39px;color:#000">小米巨能写中性笔<b class="a">&nbsp;10</b>支装<b class="a">&nbsp;</b>黑色<b class="a">&nbsp;0.5mm&nbsp;</b>商务办公中性笔会议</div>
<div style="position:absolute;left:0;top:741px;width:1622px;height:39px;background:#f4f4f4"></div>
<div style="position:absolute;left:0;top:779px;width:1622px;height:1px;background:#d9d9d9"></div>
<div class="t" style="left:4px;top:741px;width:69px;overflow:hidden;font-size:21px;line-height:39px;height:39px;color:#000"><b class="a">34</b></div>
<div class="t" style="left:79px;top:741px;width:219px;overflow:hidden;font-size:21px;line-height:39px;height:39px;color:#000">清风抽纸</div>
<div class="t" style="left:304px;top:741px;width:114px;overflow:hidden;font-size:21px;line-height:39px;height:39px;color:#000">日用品</div>
<div class="t" style="left:424px;top:741px;width:234px;overflow:hidden;font-size:21px;line-height:39px;height:39px;color:#000">清风<b class="a">2</b>层<b class="a">200</b>抽</div>
<div class="t" style="left:664px;top:741px;width:114px;overflow:hidden;font-size:21px;line-height:39px;height:39px;color:#000">包</div>
<div class="t" style="left:784px;top:741px;width:114px;overflow:hidden;font-size:21px;line-height:39px;height:39px;color:#000">超级管理员</div>
<div class="t" style="left:904px;top:741px;width:174px;overflow:hidden;font-size:21px;line-height:39px;height:39px;color:#000"><b class="a">2024/8/3&nbsp;9:39</b></div>
<div class="t" style="left:1084px;top:741px;width:536px;overflow:hidden;font-size:21px;line-height:39px;height:39px;color:#000">清风抽纸<b class="a">&nbsp;</b>原木<b class="a">2</b>层<b class="a">200</b>抽<b class="a">*20</b>包<b class="a">S</b>码<b class="a">&nbsp;</b>软抽<b class="a">&nbsp;</b>亲肤无刺激<b class="a">&nbsp;</b>面巾纸</div>
<div style="position:absolute;left:0;top:780px;width:1622px;height:39px;background:#ffffff"></div>
<div style="position:absolute;left:0;top:818px;width:1622px;height:1px;background:#d9d9d9"></div>
<div class="t" style="left:4px;top:780px;width:69px;overflow:hidden;font-size:21px;line-height:39px;height:39px;color:#000"><b class="a">35</b></div>
<div class="t" style="left:79px;top:780px;width:219px;overflow:hidden;font-size:21px;line-height:39px;height:39px;color:#000">舒可乐抽纸</div>
<div class="t" style="left:304px;top:780px;width:114px;overflow:hidden;font-size:21px;line-height:39px;height:39px;color:#000">日用品</div>
<div class="t" style="left:424px;top:780px;width:234px;overflow:hidden;font-size:21px;line-height:39px;height:39px;color:#000">舒可乐<b class="a">3</b>层<b class="a">200</b>抽</div>
<div class="t" style="left:664px;top:780px;width:114px;overflow:hidden;font-size:21px;line-height:39px;height:39px;color:#000">包</div>
<div class="t" style="left:784px;top:780px;width:114px;overflow:hidden;font-size:21px;line-height:39px;height:39px;color:#000">超级管理员</div>
<div class="t" style="left:904px;top:780px;width:174px;overflow:hidden;font-size:21px;line-height:39px;height:39px;color:#000"><b class="a">2024/8/3&nbsp;9:39</b></div>
<div class="t" style="left:1084px;top:780px;width:536px;overflow:hidden;font-size:21px;line-height:39px;height:39px;color:#000">舒可乐抽取式面巾纸，湿水不易破</div>
<div style="position:absolute;left:0;top:819px;width:1622px;height:39px;background:#f4f4f4"></div>
<div style="position:absolute;left:0;top:857px;width:1622px;height:1px;background:#d9d9d9"></div>
<div class="t" style="left:4px;top:819px;width:69px;overflow:hidden;font-size:21px;line-height:39px;height:39px;color:#000"><b class="a">36</b></div>
<div class="t" style="left:79px;top:819px;width:219px;overflow:hidden;font-size:21px;line-height:39px;height:39px;color:#000">植护挂式抽纸</div>
<div class="t" style="left:304px;top:819px;width:114px;overflow:hidden;font-size:21px;line-height:39px;height:39px;color:#000">日用品</div>
<div class="t" style="left:424px;top:819px;width:234px;overflow:hidden;font-size:21px;line-height:39px;height:39px;color:#000">植护挂式<b class="a">1040</b>张</div>
<div class="t" style="left:664px;top:819px;width:114px;overflow:hidden;font-size:21px;line-height:39px;height:39px;color:#000">提</div>
<div class="t" style="left:1084px;top:819px;width:536px;overflow:hidden;font-size:21px;line-height:39px;height:39px;color:#000">植护挂式抽纸<b class="a">&nbsp;</b>纸巾面巾纸<b class="a">&nbsp;</b>悬挂卫生纸抽<b class="a">&nbsp;</b>擦手纸<b class="a">&nbsp;1040</b>张<b class="a">*4</b>提</div>
<div style="position:absolute;left:74px;top:0;width:1px;height:843px;background:#d9d9d9"></div>
<div style="position:absolute;left:299px;top:0;width:1px;height:843px;background:#d9d9d9"></div>
<div style="position:absolute;left:419px;top:0;width:1px;height:843px;background:#d9d9d9"></div>
<div style="position:absolute;left:659px;top:0;width:1px;height:843px;background:#d9d9d9"></div>
<div style="position:absolute;left:779px;top:0;width:1px;height:843px;background:#d9d9d9"></div>
<div style="position:absolute;left:899px;top:0;width:1px;height:843px;background:#d9d9d9"></div>
<div style="position:absolute;left:1079px;top:0;width:1px;height:843px;background:#d9d9d9"></div>
</div>
<div style="position:absolute;left:1999px;top:367px;width:3px;height:719px;background:#858585;border-radius:2px"></div>
<div style="position:absolute;left:389px;top:1239px;width:1392px;height:3px;background:#858585;border-radius:2px"></div>
<div class="t " style="left:406px;top:1307px;font-size:21px;line-height:40px;height:40px;color:#404040;">每页：</div>
<div style="position:absolute;left:475px;top:1316px;width:98px;height:39px;border:1.6px solid #5aa2f6;border-radius:5px;box-sizing:border-box;background:#fff"></div>
<div class="t " style="left:480px;top:1321px;font-size:16px;line-height:32px;height:32px;color:#222;">25</div>
<svg style="position:absolute;left:542px;top:1328px" width="20" height="12" viewBox="0 0 20 12"><path d="M2,2 L10,10 L18,2" fill="none" stroke="#4a9ff5" stroke-width="2.2"/></svg>
<div class="t " style="left:582px;top:1307px;font-size:21px;line-height:40px;height:40px;color:#404040;">条</div>
<div class="t " style="left:726px;top:1307px;font-size:21px;line-height:40px;height:40px;color:#404040;">当前页：<b class="a">&nbsp;1&nbsp;/&nbsp;2</b></div>
<div class="t " style="left:987px;top:1307px;font-size:21px;line-height:40px;height:40px;color:#404040;">共<b class="a">&nbsp;40&nbsp;</b>条记录</div>
<div style="position:absolute;left:1142px;top:1312px;width:108px;height:47px;background:#52a2fc;border-radius:6px"></div>
<svg style="position:absolute;left:1149px;top:1324px" width="24" height="20"><path d="M10,2 L3,10 L10,18 M20,2 L13,10 L20,18" fill="none" stroke="#fff" stroke-width="2.8" stroke-linecap="round" stroke-linejoin="round"/></svg>
<div class="t " style="left:1180px;top:1316px;font-size:21px;line-height:40px;height:40px;color:#fff;">首<span style="display:inline-block;width:23px"></span>页</div>
<div style="position:absolute;left:1280px;top:1312px;width:108px;height:47px;background:#52a2fc;border-radius:6px"></div>
<svg style="position:absolute;left:1288px;top:1322px" width="16" height="22"><path d="M12,2 L4,11 L12,20" fill="none" stroke="#fff" stroke-width="2.8" stroke-linecap="round" stroke-linejoin="round"/></svg>
<div class="t " style="left:1318px;top:1316px;font-size:21px;line-height:40px;height:40px;color:#fff;">上一页</div>
<div style="position:absolute;left:1418px;top:1312px;width:108px;height:47px;background:#52a2fc;border-radius:6px"></div>
<svg style="position:absolute;left:1426px;top:1322px" width="16" height="22"><path d="M4,2 L12,11 L4,20" fill="none" stroke="#fff" stroke-width="2.8" stroke-linecap="round" stroke-linejoin="round"/></svg>
<div class="t " style="left:1456px;top:1316px;font-size:21px;line-height:40px;height:40px;color:#fff;">下一页</div>
<div style="position:absolute;left:1556px;top:1312px;width:108px;height:47px;background:#52a2fc;border-radius:6px"></div>
<svg style="position:absolute;left:1563px;top:1324px" width="24" height="20"><path d="M4,2 L11,10 L4,18 M14,2 L21,10 L14,18" fill="none" stroke="#fff" stroke-width="2.8" stroke-linecap="round" stroke-linejoin="round"/></svg>
<div class="t " style="left:1594px;top:1316px;font-size:21px;line-height:40px;height:40px;color:#fff;">尾<span style="display:inline-block;width:23px"></span>页</div>
<div class="t " style="left:1716px;top:1307px;font-size:21px;line-height:40px;height:40px;color:#404040;">前往：</div>
<div style="position:absolute;left:1778px;top:1316px;width:57px;height:39px;border:1.6px solid #5aa2f6;border-radius:5px;box-sizing:border-box;background:#fff"></div>
<div class="t" style="left:1778px;top:1319px;width:57px;text-align:center;font-family:'Liberation Serif',serif;font-size:19px;line-height:34px;height:34px;color:#000">1</div>
<div class="t " style="left:1841px;top:1307px;font-size:21px;line-height:40px;height:40px;color:#404040;">页</div>
<div style="position:absolute;left:1880px;top:1312px;width:102px;height:47px;background:#52a2fc;border-radius:6px"></div>
<svg style="position:absolute;left:1892px;top:1323px" width="24" height="24" viewBox="0 0 24 24"><path d="M1,9 L8,9 L8,4 L15,12 L8,20 L8,15 L1,15 Z" fill="#fff"/><path d="M15,2.5 L20,2.5 Q22.5,2.5 22.5,5 L22.5,19 Q22.5,21.5 20,21.5 L15,21.5" fill="none" stroke="#fff" stroke-width="2.2"/></svg>
<div class="t " style="left:1925px;top:1316px;font-size:21px;line-height:40px;height:40px;color:#fff;">跳转</div>
</body></html>
